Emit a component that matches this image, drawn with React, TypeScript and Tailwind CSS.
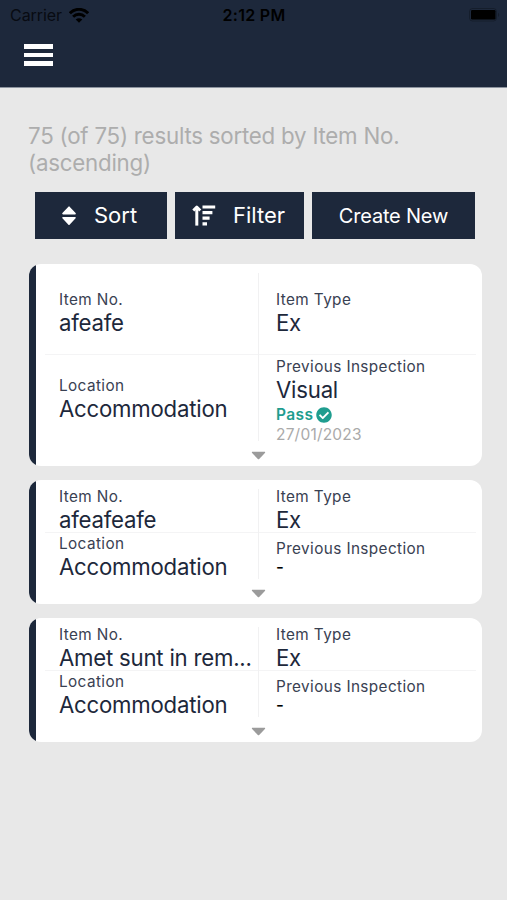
import React from 'react';
import { FaCheckCircle } from 'react-icons/fa';

interface Item {
  itemNo: string;
  type: string;
  location: string;
  inspection?: { name: string; result: string; date: string };
}

const items: Item[] = [
  {
    itemNo: 'afeafe',
    type: 'Ex',
    location: 'Accommodation',
    inspection: { name: 'Visual', result: 'Pass', date: '27/01/2023' },
  },
  { itemNo: 'afeafeafe', type: 'Ex', location: 'Accommodation' },
  { itemNo: 'Amet sunt in rem...', type: 'Ex', location: 'Accommodation' },
];

function StatusBar() {
  return (
    <div className="flex h-[30px] items-center px-[10px] text-black">
      <div className="flex flex-1 items-center gap-[7px]">
        <span className="text-[16px] tracking-[-0.05px] text-[#080b12]">Carrier</span>
        <svg width="20" height="15" viewBox="0 0 20 15" fill="none" stroke="currentColor">
          <path d="M0.9 5.3C6 0 14 0 19.1 5.3" strokeWidth="3" />
          <path d="M4.1 8.7C7.4 5.5 12.6 5.5 15.9 8.7" strokeWidth="2.9" />
          <path d="M10 14.7L6.7 11.4C8.6 9.7 11.4 9.7 13.3 11.4Z" fill="currentColor" stroke="none" />
        </svg>
      </div>
      <span className="pl-px text-[16px] font-semibold tracking-[0.3px]">2:12 PM</span>
      <div className="flex flex-1 justify-end">
        <svg width="31" height="14" viewBox="0 0 31 14" className="-mr-[3px]">
          <rect x="0.5" y="0.5" width="27" height="12.5" rx="3" fill="none" stroke="#000" strokeOpacity="0.25" />
          <rect x="2" y="2" width="24.5" height="9.5" rx="1.2" fill="#000" />
          <path d="M29 4.7C30.6 5.4 30.6 8.2 29 8.9Z" fill="#000" fillOpacity="0.25" />
        </svg>
      </div>
    </div>
  );
}

function Header() {
  return (
    <header className="h-[88px] border-b border-[#8d949f] bg-[#1d283b]">
      <StatusBar />
      <button className="ml-6 mt-[14px] flex w-[29px] flex-col gap-[4px]" aria-label="Menu">
        <span className="h-[5px] w-full bg-white" />
        <span className="h-[4px] w-full bg-white" />
        <span className="h-[5px] w-full bg-white" />
      </button>
    </header>
  );
}

function SortIcon() {
  return (
    <svg width="14" height="20" viewBox="0 0 14 20" fill="currentColor" stroke="currentColor" strokeLinejoin="round">
      <path d="M7 1.2L13 7.6H1Z" strokeWidth="1.6" />
      <path d="M7 18.2L13 11.8H1Z" strokeWidth="1.6" />
    </svg>
  );
}

function FilterIcon() {
  return (
    <svg width="24" height="22" viewBox="0 0 24 22" fill="none" stroke="currentColor">
      <path d="M4.8 20.6V3" strokeWidth="3" />
      <path d="M1.3 5.6L4.8 2L8.3 5.6" strokeWidth="2.8" strokeLinejoin="round" />
      <path d="M10.5 2H23.2M10.5 7.6H20.4M10.5 13.2H17.6M10.5 18.9H15" strokeWidth="3.2" />
    </svg>
  );
}

function Label({ children }: { children: React.ReactNode }) {
  return <div className="h-[19px] text-[15.3px] leading-[19px] tracking-[0.4px] text-[#394152]">{children}</div>;
}

function Value({ children }: { children: React.ReactNode }) {
  return (
    <div className="h-7 whitespace-nowrap text-[22.2px] leading-7 tracking-[-0.22px] text-[#1d283b]">
      {children}
    </div>
  );
}

function ItemCard({ item }: { item: Item }) {
  const { inspection } = item;
  const rows = inspection ? 'grid-rows-[85px_87px]' : 'grid-rows-[47px_47px]';

  return (
    <div className="relative flex overflow-hidden rounded-[12px] bg-white">
      <div className="w-[7px] shrink-0 bg-[#1d283b]" />
      <div className={`grid flex-1 grid-cols-[222px_1fr] pb-[23px] pt-[7px] ${rows}`}>
        <div className="relative flex flex-col justify-center pl-[23px]">
          <Label>Item No.</Label>
          <Value>{item.itemNo}</Value>
          <div className="absolute bottom-px left-[9px] h-px w-[431px] bg-[#f4f4f5]" />
        </div>
        <div className="flex flex-col justify-center pl-[18px]">
          <Label>Item Type</Label>
          <Value>{item.type}</Value>
        </div>
        <div className="flex flex-col justify-center pl-[23px]">
          <Label>Location</Label>
          <Value>{item.location}</Value>
        </div>
        <div className="flex flex-col justify-center pl-[18px] pt-px">
          <Label>Previous Inspection</Label>
          {inspection ? (
            <>
              <Value>{inspection.name}</Value>
              <div className="flex h-5 items-center gap-[3px] pt-[2px] text-[15.5px] font-semibold tracking-[0.4px] text-[#1f9d8f]">
                {inspection.result}
                <FaCheckCircle className="h-4 w-4" />
              </div>
              <div className="h-5 pt-px text-[15.5px] leading-5 tracking-[0.2px] text-[#aaaaaa]">{inspection.date}</div>
            </>
          ) : (
            <div className="h-[19px] text-[17px] font-medium leading-[19px] text-black">-</div>
          )}
        </div>
      </div>
      <div className="absolute bottom-[25px] left-[229px] top-[9px] w-px bg-[#f1f1f2]" />
      <svg className="absolute bottom-[6px] left-[222px]" width="15" height="9" viewBox="0 0 15 9" fill="#9b9b9b">
        <path d="M1.1 0.8H13.9Q14.5 1.2 13.9 1.9L8.2 7.9Q7.5 8.5 6.8 7.9L1.1 1.9Q0.5 1.2 1.1 0.8Z" />
      </svg>
    </div>
  );
}

export default function App() {
  return (
    <div className="min-h-[900px] w-full bg-[#e8e8e8] font-['Inter',sans-serif]">
      <Header />

      <main className="pl-[29px] pr-[25px] pt-[34px]">
        <p className="-ml-px text-[22.3px] leading-[27px] tracking-[-0.23px] text-[#adadad]">
          75 (of 75) results sorted by Item No.
          <br />
          (ascending)
        </p>

        <div className="ml-[6px] mt-[16px] flex h-[47px] gap-2 text-[22px] text-white">
          <button className="flex w-[132px] items-center bg-[#1d283b] pl-[27px]">
            <SortIcon />
            <span className="ml-[18px]">Sort</span>
          </button>
          <button className="flex w-[129px] items-center bg-[#1d283b] pl-[17px]">
            <FilterIcon />
            <span className="ml-[17px]">Filter</span>
          </button>
          <button className="w-[163px] bg-[#1d283b] text-[20px] tracking-[-0.2px]">Create New</button>
        </div>

        <div className="mt-[25px] flex flex-col gap-[14px]">
          {items.map((item) => (
            <ItemCard key={item.itemNo} item={item} />
          ))}
        </div>
      </main>
    </div>
  );
}
